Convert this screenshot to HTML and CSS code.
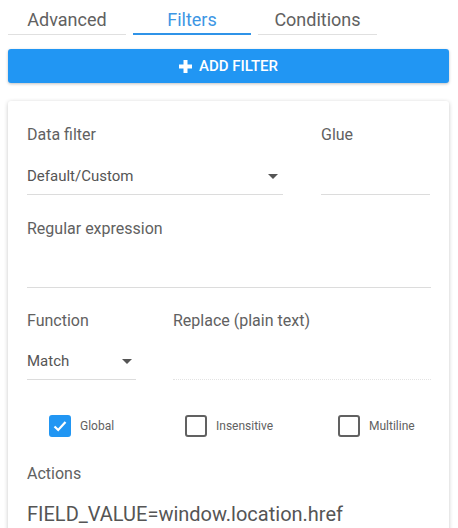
FILE: index.html
```html
<!DOCTYPE html>
<html>
<head>
<meta charset="utf-8">
<link rel="stylesheet" href="styles.css">
</head>
<body>
<div class="tabs">
  <div class="tab">Advanced</div>
  <div class="tab active">Filters</div>
  <div class="tab">Conditions</div>
</div>
<button class="add-btn">
  <svg class="plus" width="13" height="13" viewBox="0 0 13 13"><rect x="4.5" y="0" width="4" height="13" fill="#fff"/><rect x="0" y="4.5" width="13" height="4" fill="#fff"/></svg>
  <span>ADD FILTER</span>
</button>
<div class="card">
  <div class="row row-1">
    <div class="field field-data">
      <div class="label">Data filter</div>
      <div class="input select"><span>Default/Custom</span><span class="arrow"></span></div>
    </div>
    <div class="field field-glue">
      <div class="label">Glue</div>
      <div class="input"></div>
    </div>
  </div>
  <div class="row row-2">
    <div class="field field-full">
      <div class="label">Regular expression</div>
      <div class="input"></div>
    </div>
  </div>
  <div class="row row-3">
    <div class="field field-func">
      <div class="label">Function</div>
      <div class="input select"><span>Match</span><span class="arrow"></span></div>
    </div>
    <div class="field field-replace">
      <div class="label">Replace (plain text)</div>
      <div class="input disabled"></div>
    </div>
  </div>
  <div class="checks">
    <div class="check"><span class="box checked"><svg width="18" height="18" viewBox="0 0 18 18"><path d="M3.5 9.5 L7.2 13 L14.5 5" fill="none" stroke="#fff" stroke-width="2.2"/></svg></span><span class="check-label">Global</span></div>
    <div class="check"><span class="box"></span><span class="check-label">Insensitive</span></div>
    <div class="check"><span class="box"></span><span class="check-label">Multiline</span></div>
  </div>
  <div class="label actions-label">Actions</div>
  <div class="actions-value">FIELD_VALUE=window.location.href</div>
</div>
</body>
</html>
```
FILE: styles.css
```css
html, body {
  margin: 0;
  padding: 0;
  background: #fff;
  overflow: hidden;
}
body {
  padding: 0 9px 0 8px;
  font-family: Roboto, "Liberation Sans", sans-serif;
  color: #616161;
}
.tabs {
  display: flex;
  gap: 7px;
}
.tab {
  width: 118px;
  height: 35px;
  box-sizing: border-box;
  padding-top: 9px;
  line-height: 22px;
  font-size: 18px;
  text-align: center;
  color: #616161;
  border-bottom: 1px solid #e0e0e0;
}
.tab:last-child {
  width: 119px;
}
.tab.active {
  color: #3d96e4;
  border-bottom: 2px solid #2f93e8;
}
.add-btn {
  margin-top: 14px;
  width: 100%;
  height: 34px;
  border: none;
  border-radius: 3px;
  background: #2196f3;
  box-shadow: 0 1px 3px rgba(0,0,0,0.25);
  color: #fff;
  font-family: Roboto, "Liberation Sans", sans-serif;
  font-size: 15px;
  font-weight: 500;
  display: flex;
  align-items: center;
  justify-content: center;
  gap: 7px;
  padding: 0;
}
.plus {
  display: block;
}
.card {
  margin-top: 18px;
  border-radius: 3px;
  box-shadow: 0 1px 4px rgba(0,0,0,0.22);
  padding: 24px 18px 10px 19px;
  height: 440px;
}
.row {
  display: flex;
}
.row-1 { gap: 38px; }
.row-2 { margin-top: 24px; }
.row-3 { margin-top: 23px; gap: 37px; }
.field-data { width: 256px; }
.field-glue { width: 109px; }
.field-full { flex: 1; }
.field-func { width: 109px; }
.field-replace { flex: 1; }
.label {
  font-size: 16px;
  line-height: 20px;
  color: #616161;
}
.input {
  margin-top: 21px;
  height: 20px;
  line-height: 20px;
  padding-bottom: 7px;
  border-bottom: 1px solid #dcdcdc;
  font-size: 15px;
  color: #555;
  display: flex;
  justify-content: space-between;
  align-items: center;
}
.row-1 .input { padding-bottom: 8px; }
.row-3 .input { margin-top: 20px; padding-bottom: 8px; }
.input.disabled {
  border-bottom: 1px dotted #e3e3e3;
}
.arrow {
  width: 0;
  height: 0;
  border-left: 5px solid transparent;
  border-right: 5px solid transparent;
  border-top: 5px solid #555;
  margin-right: 5px;
}
.field-func .arrow { margin-right: 4px; }
.checks {
  margin-top: 35px;
  padding-left: 22px;
  display: grid;
  grid-template-columns: 136px 153px auto;
}
.check {
  display: flex;
  align-items: center;
  gap: 9px;
}
.box {
  width: 22px;
  height: 22px;
  box-sizing: border-box;
  border: 2px solid #616161;
  border-radius: 3px;
  display: flex;
  align-items: center;
  justify-content: center;
}
.box.checked {
  background: #2196f3;
  border-color: #2196f3;
}
.box svg { display: block; }
.check-label {
  font-size: 12px;
  color: #616161;
}
.actions-label {
  margin-top: 27px;
}
.actions-value {
  margin-top: 18px;
  font-size: 20px;
  line-height: 24px;
  color: #555;
}
```
